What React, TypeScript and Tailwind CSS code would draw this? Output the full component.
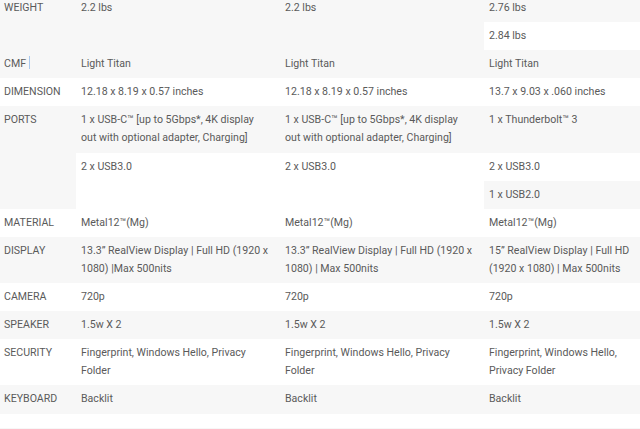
const font = { fontFamily: 'Roboto, "Liberation Sans", sans-serif' }

const g = 'bg-[#f7f7f7]'
const w = 'bg-white'
const td = 'px-[5px] py-[5px] align-top whitespace-nowrap'
const th = 'pl-[4px] pr-[5px] py-[5px] align-top whitespace-nowrap font-normal text-left'

export default function App() {
  return (
    <div className="w-[640px] h-[429px] overflow-hidden bg-white text-[10.6px] leading-[18.1px] text-[#5a5a5a]" style={font}>
      <table className="table-fixed border-collapse w-[640px] -mt-[6px]">
        <colgroup>
          <col className="w-[76px]" />
          <col className="w-[204px]" />
          <col className="w-[204px]" />
          <col className="w-[156px]" />
        </colgroup>
        <tbody>
          <tr className={g}>
            <th rowSpan={2} className={th}>WEIGHT</th>
            <td rowSpan={2} className={td}>2.2 lbs</td>
            <td rowSpan={2} className={td}>2.2 lbs</td>
            <td className={td}>2.76 lbs</td>
          </tr>
          <tr>
            <td className={`${td} ${w}`}>2.84 lbs</td>
          </tr>
          <tr className={g}>
            <th className={th}>
              CMF<span className="inline-block w-px h-[13px] bg-[#a9c9ee] ml-[3px] align-[-2px]" />
            </th>
            <td className={td}>Light Titan</td>
            <td className={td}>Light Titan</td>
            <td className={td}>Light Titan</td>
          </tr>
          <tr className={w}>
            <th className={th}>DIMENSION</th>
            <td className={td}>12.18 x 8.19 x 0.57 inches</td>
            <td className={td}>12.18 x 8.19 x 0.57 inches</td>
            <td className={td}>13.7 x 9.03 x .060 inches</td>
          </tr>
          <tr className={g}>
            <th rowSpan={3} className={th}>PORTS</th>
            <td className={td}>
              1 x USB-C™ [up to 5Gbps*, 4K display<br />out with optional adapter, Charging]
            </td>
            <td className={td}>
              1 x USB-C™ [up to 5Gbps*, 4K display<br />out with optional adapter, Charging]
            </td>
            <td className={td}>1 x Thunderbolt™ 3</td>
          </tr>
          <tr className={w}>
            <td rowSpan={2} className={td}>2 x USB3.0</td>
            <td rowSpan={2} className={td}>2 x USB3.0</td>
            <td className={td}>2 x USB3.0</td>
          </tr>
          <tr>
            <td className={`${td} ${g}`}>1 x USB2.0</td>
          </tr>
          <tr className={w}>
            <th className={th}>MATERIAL</th>
            <td className={td}>Metal12™(Mg)</td>
            <td className={td}>Metal12™(Mg)</td>
            <td className={td}>Metal12™(Mg)</td>
          </tr>
          <tr className={g}>
            <th className={th}>DISPLAY</th>
            <td className={td}>
              13.3” RealView Display | Full HD (1920 x<br />1080) |Max 500nits
            </td>
            <td className={td}>
              13.3” RealView Display | Full HD (1920 x<br />1080) | Max 500nits
            </td>
            <td className={td}>
              15” RealView Display | Full HD<br />(1920 x 1080) | Max 500nits
            </td>
          </tr>
          <tr className={w}>
            <th className={th}>CAMERA</th>
            <td className={td}>720p</td>
            <td className={td}>720p</td>
            <td className={td}>720p</td>
          </tr>
          <tr className={g}>
            <th className={th}>SPEAKER</th>
            <td className={td}>1.5w X 2</td>
            <td className={td}>1.5w X 2</td>
            <td className={td}>1.5w X 2</td>
          </tr>
          <tr className={w}>
            <th className={th}>SECURITY</th>
            <td className={td}>
              Fingerprint, Windows Hello, Privacy<br />Folder
            </td>
            <td className={td}>
              Fingerprint, Windows Hello, Privacy<br />Folder
            </td>
            <td className={td}>
              Fingerprint, Windows Hello,<br />Privacy Folder
            </td>
          </tr>
          <tr className={g}>
            <th className={th}>KEYBOARD</th>
            <td className={td}>Backlit</td>
            <td className={td}>Backlit</td>
            <td className={td}>Backlit</td>
          </tr>
        </tbody>
      </table>
      <div className="h-[14px] bg-white" />
      <div className={`h-[20px] ${g}`} />
    </div>
  )
}
